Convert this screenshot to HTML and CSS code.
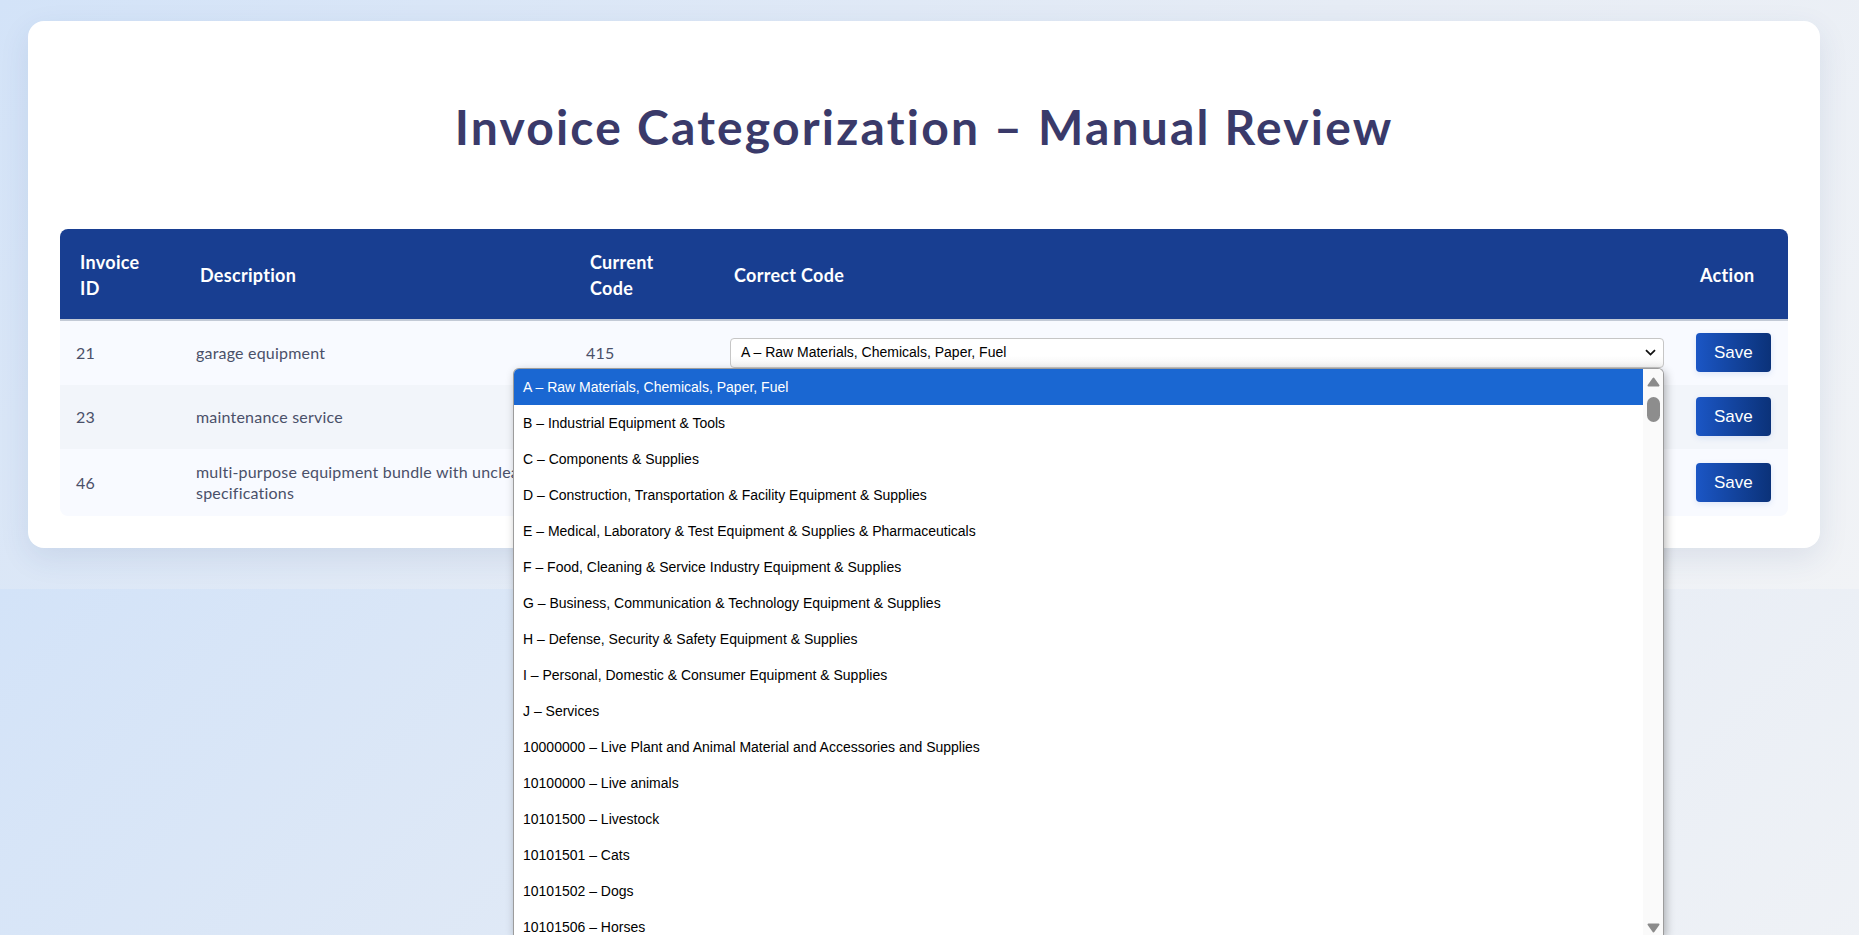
FILE: index.html
```html
<!DOCTYPE html>
<html lang="en">
<head>
<meta charset="utf-8">
<title>Invoice Categorization – Manual Review</title>
<link rel="stylesheet" href="styles.css">
</head>
<body>
<main class="card">
  <h1 class="title">Invoice Categorization – Manual Review</h1>
  <div class="table-wrap">
    <table class="grid">
      <colgroup>
        <col class="c-id"><col class="c-desc"><col class="c-cur"><col class="c-code"><col class="c-act">
      </colgroup>
      <thead>
        <tr>
          <th>Invoice ID</th>
          <th>Description</th>
          <th>Current Code</th>
          <th>Correct Code</th>
          <th>Action</th>
        </tr>
      </thead>
      <tbody>
        <tr>
          <td>21</td>
          <td>garage equipment</td>
          <td>415</td>
          <td>
            <div class="select">
              <span class="select-text">A – Raw Materials, Chemicals, Paper, Fuel</span>
              <svg class="chev" width="11" height="7" viewBox="0 0 11 7"><path d="M1 1.2 L5.5 5.6 L10 1.2" fill="none" stroke="#111" stroke-width="1.8"/></svg>
            </div>
          </td>
          <td><button class="save">Save</button></td>
        </tr>
        <tr>
          <td>23</td>
          <td>maintenance service</td>
          <td></td>
          <td>
            <div class="select">
              <span class="select-text"></span>
              <svg class="chev" width="11" height="7" viewBox="0 0 11 7"><path d="M1 1.2 L5.5 5.6 L10 1.2" fill="none" stroke="#111" stroke-width="1.8"/></svg>
            </div>
          </td>
          <td><button class="save">Save</button></td>
        </tr>
        <tr>
          <td>46</td>
          <td>multi-purpose equipment bundle with unclear specifications</td>
          <td></td>
          <td>
            <div class="select">
              <span class="select-text"></span>
              <svg class="chev" width="11" height="7" viewBox="0 0 11 7"><path d="M1 1.2 L5.5 5.6 L10 1.2" fill="none" stroke="#111" stroke-width="1.8"/></svg>
            </div>
          </td>
          <td><button class="save">Save</button></td>
        </tr>
      </tbody>
    </table>
  </div>

  <div class="popup">
    <ul class="options">
      <li class="opt active">A – Raw Materials, Chemicals, Paper, Fuel</li>
      <li class="opt">B – Industrial Equipment &amp; Tools</li>
      <li class="opt">C – Components &amp; Supplies</li>
      <li class="opt">D – Construction, Transportation &amp; Facility Equipment &amp; Supplies</li>
      <li class="opt">E – Medical, Laboratory &amp; Test Equipment &amp; Supplies &amp; Pharmaceuticals</li>
      <li class="opt">F – Food, Cleaning &amp; Service Industry Equipment &amp; Supplies</li>
      <li class="opt">G – Business, Communication &amp; Technology Equipment &amp; Supplies</li>
      <li class="opt">H – Defense, Security &amp; Safety Equipment &amp; Supplies</li>
      <li class="opt">I – Personal, Domestic &amp; Consumer Equipment &amp; Supplies</li>
      <li class="opt">J – Services</li>
      <li class="opt">10000000 – Live Plant and Animal Material and Accessories and Supplies</li>
      <li class="opt">10100000 – Live animals</li>
      <li class="opt">10101500 – Livestock</li>
      <li class="opt">10101501 – Cats</li>
      <li class="opt">10101502 – Dogs</li>
      <li class="opt">10101506 – Horses</li>
    </ul>
    <div class="scrollbar">
      <svg class="arrow up" width="13" height="10" viewBox="0 0 13 10"><path d="M6.5 1.5 L11.5 8.5 L1.5 8.5 Z" fill="#8b8b8b" stroke="#8b8b8b" stroke-width="2" stroke-linejoin="round"/></svg>
      <div class="thumb"></div>
      <div class="track-space"></div>
      <svg class="arrow down" width="13" height="10" viewBox="0 0 13 10"><path d="M1.5 1.5 L11.5 1.5 L6.5 8.5 Z" fill="#8b8b8b" stroke="#8b8b8b" stroke-width="2" stroke-linejoin="round"/></svg>
    </div>
  </div>
</main>
</body>
</html>
```

FILE: styles.css
```css
html {
  margin: 0;
  height: 100%;
  background: linear-gradient(135deg, #d3e3f8 0%, #e6ecf5 55%, #f1f3f6 100%);
  background-size: 100% 589px;
  background-repeat: repeat;
}

body {
  margin: 0;
  min-height: 100%;
  box-sizing: border-box;
  padding: 21px 39px 40px 28px;
  font-family: Lato, "Open Sans", sans-serif;
}

.card {
  position: relative;
  background: #ffffff;
  border-radius: 16px;
  padding: 32px;
  box-shadow: 0 10px 30px rgba(40, 70, 130, 0.10);
}

.title {
  margin: 45px 0 73px;
  font-family: Lato, "Open Sans", sans-serif;
  font-weight: 700;
  font-size: 48px;
  letter-spacing: 2.2px;
  line-height: 1.2;
  color: #3a3a6a;
  text-align: center;
}

.table-wrap {
  border-radius: 8px;
  overflow: hidden;
}

.grid {
  width: 100%;
  border-collapse: separate;
  border-spacing: 0;
  table-layout: fixed;
}

.c-id { width: 120px; }
.c-desc { width: 390px; }
.c-cur { width: 144px; }
.c-code { width: 966px; }
.c-act { width: 108px; }

.grid th {
  background: #183e91;
  color: #ffffff;
  font-family: Lato, "Open Sans", sans-serif;
  font-weight: 700;
  font-size: 18px;
  letter-spacing: 0.3px;
  line-height: 26px;
  text-align: left;
  padding: 20px 20px 18px;
  border-bottom: 2px solid #c3cad6;
  vertical-align: middle;
}

.grid td {
  padding: 12.5px 16px;
  font-size: 16px;
  letter-spacing: 0.2px;
  line-height: 21px;
  color: #4a5069;
  vertical-align: middle;
}

.grid tbody tr:nth-child(odd) td {
  background: #f8faff;
}

.grid tbody tr:nth-child(even) td {
  background: #f2f5fa;
}

.select {
  display: flex;
  align-items: center;
  justify-content: space-between;
  height: 30px;
  box-sizing: border-box;
  padding: 0 7px 0 10px;
  border: 1px solid #c6c6c6;
  border-radius: 4px;
  background: linear-gradient(#ffffff 0%, #ffffff 60%, #f4f4f4 100%);
  font-family: "Liberation Sans", Arial, sans-serif;
  font-size: 14px;
  letter-spacing: 0;
  color: #000;
}

.select-text {
  white-space: nowrap;
}

.chev {
  flex: none;
}

.save {
  display: block;
  border: 0;
  border-radius: 4px;
  padding: 10px 18px;
  background: linear-gradient(90deg, #1b56c5 0%, #0b3279 100%);
  color: #ffffff;
  font-family: "Liberation Sans", Arial, sans-serif;
  font-size: 17px;
  letter-spacing: 0;
  line-height: 19px;
  box-shadow: 0 2px 6px rgba(27, 86, 197, 0.12);
  cursor: pointer;
}

/* open native-like dropdown list overlaying the table */
.popup {
  position: absolute;
  left: 485px;
  top: 347px;
  width: 1151px;
  height: 567px;
  box-sizing: border-box;
  display: flex;
  background: #ffffff;
  border: 1px solid #9c9c9c;
  border-bottom: 0;
  border-radius: 6px 6px 0 0;
  overflow: hidden;
  box-shadow: 2px 3px 10px rgba(0, 0, 0, 0.28);
  font-family: "Liberation Sans", Arial, sans-serif;
  font-size: 14px;
  color: #000;
}

.options {
  flex: 1;
  margin: 0;
  padding: 0;
  list-style: none;
  overflow: hidden;
}

.opt {
  height: 36px;
  box-sizing: border-box;
  padding: 1px 9px 0;
  line-height: 35px;
  white-space: nowrap;
}

.opt.active {
  background: #1a67d2;
  color: #ffffff;
}

.scrollbar {
  flex: none;
  width: 20px;
  display: flex;
  flex-direction: column;
  align-items: center;
  background: #fafafa;
}

.arrow.up {
  margin-top: 8px;
}

.thumb {
  margin-top: 10px;
  width: 13px;
  height: 25px;
  border-radius: 7px;
  background: #8d8d8d;
}

.track-space {
  flex: 1;
}

.arrow.down {
  margin-bottom: 2px;
}
```
